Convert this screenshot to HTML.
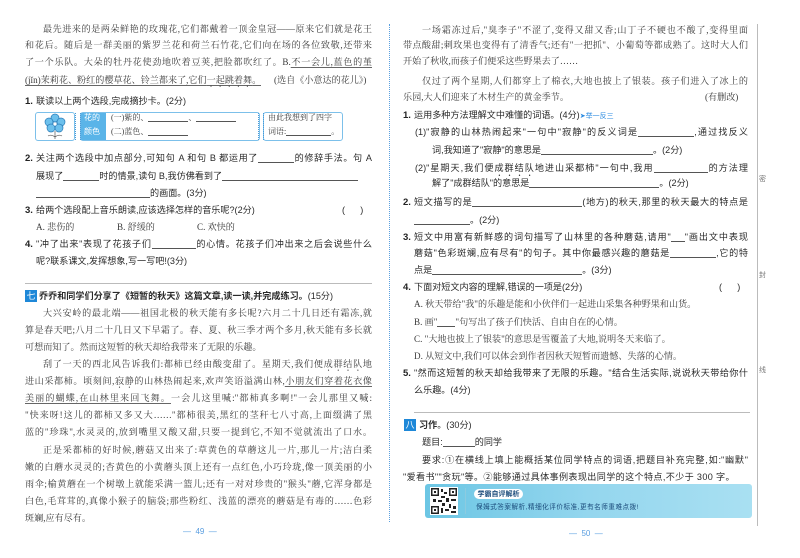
<!DOCTYPE html>
<html><head><meta charset="utf-8">
<style>
*{margin:0;padding:0;box-sizing:border-box}
body{width:800px;height:558px;background:#fff;position:relative;overflow:hidden;font-family:"Liberation Serif","Noto Serif CJK SC",serif;color:#3a3a3a}
.r{position:absolute;height:17px;line-height:17px;font-size:9.1px;white-space:nowrap;overflow:hidden}
.j{text-align:justify;text-align-last:justify;white-space:normal}
.q{font-family:"Liberation Sans","Noto Sans CJK SC",sans-serif;color:#2a2a2a}
.n{position:absolute;font-family:"Liberation Sans",sans-serif;font-weight:bold;font-size:9.5px;line-height:17px;color:#222}
.b{display:inline-block;border-bottom:1px solid #555;height:11px;vertical-align:-2px}
u{text-decoration:underline;text-underline-offset:2px;text-decoration-color:#666}
.dot{-webkit-text-emphasis:dot;-webkit-text-emphasis-position:under;text-emphasis:dot;text-emphasis-position:under right}
.hr{position:absolute;height:1px;background:#bbb}
.tag{position:absolute;width:12px;height:12px;background:#1e88d8;color:#fff;font-size:9px;line-height:12px;text-align:center;font-family:"Noto Sans CJK SC",sans-serif}
</style></head><body>

<!-- binding lines -->
<div style="position:absolute;left:389px;top:24px;width:0;height:498px;border-left:1px dotted #5aa0e0"></div>
<div style="position:absolute;left:757px;top:24px;width:1px;height:502px;background:#bbb"></div>
<div class="r q" style="left:759px;top:171px;font-size:7px;color:#777">密</div>
<div class="r q" style="left:759px;top:267px;font-size:7px;color:#777">封</div>
<div class="r q" style="left:759px;top:362px;font-size:7px;color:#777">线</div>

<!-- LEFT PAGE -->
<div class="r j" style="left:43px;top:21px;width:329px">最先进来的是两朵鲜艳的玫瑰花,它们都戴着一顶金皇冠——原来它们就是花王</div>
<div class="r j" style="left:25px;top:37px;width:347px">和花后。随后是一群美丽的紫罗兰花和荷兰石竹花,它们向在场的各位致敬,还带来</div>
<div class="r j" style="left:25px;top:54px;width:347px">了一个乐队。大朵的牡丹花使劲地吹着豆荚,把脸都吹红了。B.<u>不一会儿,蓝色的堇</u></div>
<div class="r" style="left:25px;top:72px"><u>(jǐn)茉莉花、粉红的樱草花、铃兰都来了,它们<span class="dot">一起跳着舞</span>。</u></div>
<div class="r" style="left:274px;top:72px">(选自《小意达的花儿》)</div>

<div class="n" style="left:25px;top:93px">1.</div>
<div class="r q" style="left:36px;top:93px">联读以上两个选段,完成摘抄卡。(2分)</div>
<!-- card -->
<div style="position:absolute;left:35px;top:112px;width:40px;height:29px;border:1px solid #7cc0ea;border-radius:3px"></div>
<svg style="position:absolute;left:43px;top:113px" width="24" height="27" viewBox="0 0 24 27">
<g fill="#6cc0ec" stroke="#2a7cb8" stroke-width=".7"><circle cx="12" cy="5" r="4"/><circle cx="6" cy="9" r="4"/><circle cx="18" cy="9" r="4"/><circle cx="8" cy="15" r="4"/><circle cx="16" cy="15" r="4"/></g>
<circle cx="12" cy="11" r="2" fill="#fff" stroke="#2a7cb8" stroke-width=".6"/>
<path d="M12 18v8M12 24q-4-3-7-1M12 24q4-3 7-1" stroke="#555" fill="none" stroke-width=".7"/></svg>
<div style="position:absolute;left:80px;top:112px;width:180px;height:29px;border:1px solid #7cc0ea;border-radius:3px"></div>
<div style="position:absolute;left:81px;top:113px;width:25px;height:27px;background:#5ab4e8"></div>
<div class="r q" style="left:84px;top:109px;font-size:8px;color:#fff">花的</div>
<div class="r q" style="left:84px;top:123px;font-size:8px;color:#fff">颜色</div>
<div class="r" style="left:111px;top:109px;font-size:8px">(一)紫的、<span class="b" style="width:40px;height:9px"></span>、<span class="b" style="width:40px;height:9px"></span></div>
<div class="r" style="left:111px;top:123px;font-size:8px">(二)蓝色、<span class="b" style="width:40px;height:9px"></span></div>
<div style="position:absolute;left:263px;top:112px;width:80px;height:29px;border:1px solid #7cc0ea;border-radius:3px"></div>
<div class="r" style="left:268px;top:109px;font-size:8px">由此我想到了四字</div>
<div class="r" style="left:268px;top:123px;font-size:8px">词语:<span class="b" style="width:45px;height:9px"></span>。</div>
<div style="position:absolute;left:75px;top:113px;width:6px;height:27px;border-left:1.5px dotted #4a9ad8;border-right:1.5px dotted #4a9ad8"></div>
<div style="position:absolute;left:258px;top:113px;width:6px;height:27px;border-left:1.5px dotted #4a9ad8;border-right:1.5px dotted #4a9ad8"></div>

<div class="n" style="left:25px;top:150px">2.</div>
<div class="r q j" style="left:36px;top:150px;width:336px">关注两个选段中加点部分,可知句 A 和句 B 都运用了<span class="b" style="width:36px"></span>的修辞手法。句 A</div>
<div class="r q" style="left:36px;top:168px">展现了<span class="b" style="width:36px"></span>时的情景,读句 B,我仿佛看到了<span class="b" style="width:136px"></span></div>
<div class="r q" style="left:36px;top:185px"><span class="b" style="width:114px"></span>的画面。(3分)</div>
<div class="n" style="left:25px;top:202px">3.</div>
<div class="r q" style="left:36px;top:202px">给两个选段配上音乐朗读,应该选择怎样的音乐呢?(2分)</div>
<div class="r q" style="left:342px;top:202px">(&nbsp;&nbsp;&nbsp;&nbsp;&nbsp;&nbsp;)</div>
<div class="r" style="left:36px;top:219px">A. 悲伤的</div>
<div class="r" style="left:117px;top:219px">B. 舒缓的</div>
<div class="r" style="left:197px;top:219px">C. 欢快的</div>
<div class="n" style="left:25px;top:236px">4.</div>
<div class="r q j" style="left:36px;top:236px;width:336px">"冲了出来"表现了花孩子们<span class="b" style="width:44px"></span>的心情。花孩子们冲出来之后会说些什么</div>
<div class="r q" style="left:36px;top:253px">呢?联系课文,发挥想象,写一写吧!(3分)</div>
<div class="hr" style="left:25px;top:283px;width:347px"></div>

<div class="tag" style="left:25px;top:290px">七</div>
<div class="r q" style="left:39px;top:288px;font-weight:bold">乔乔和同学们分享了《短暂的秋天》这篇文章,读一读,并完成练习。<span style="font-weight:normal">(15分)</span></div>
<div class="r j" style="left:43px;top:305px;width:329px">大兴安岭的最北端——祖国北极的秋天能有多长呢?六月二十几日还有霜冻,就</div>
<div class="r j" style="left:25px;top:322px;width:347px">算是春天吧;八月二十几日又下早霜了。春、夏、秋三季才两个多月,秋天能有多长就</div>
<div class="r" style="left:25px;top:339px">可想而知了。然而这短暂的秋天却给我带来了无限的乐趣。</div>
<div class="r j" style="left:43px;top:356px;width:329px">刮了一天的西北风告诉我们:都柿已经由酸变甜了。星期天,我们便<span class="dot">成群结队</span>地</div>
<div class="r j" style="left:25px;top:373px;width:347px">进山采都柿。顷刻间,<span class="dot">寂静</span>的山林热闹起来,欢声笑语溢满山林,<u>小朋友们穿着花衣像</u></div>
<div class="r j" style="left:25px;top:390px;width:347px"><u>美丽的蝴蝶,在山林里来回飞舞。</u>一会儿这里喊:"都柿真多啊!"一会儿那里又喊:</div>
<div class="r j" style="left:25px;top:407px;width:347px">"快来呀!这儿的都柿又多又大……"都柿很美,黑红的茎秆七八寸高,上面缀满了黑</div>
<div class="r j" style="left:25px;top:424px;width:347px">蓝的"珍珠",水灵灵的,放到嘴里又酸又甜,只要一提到它,不知不觉就流出了口水。</div>
<div class="r j" style="left:43px;top:442px;width:329px">正是采都柿的好时候,蘑菇又出来了:草黄色的草蘑这儿一片,那儿一片;洁白柔</div>
<div class="r j" style="left:25px;top:459px;width:347px">嫩的白蘑水灵灵的;杏黄色的小黄蘑头顶上还有一点红色,小巧玲珑,像一顶美丽的小</div>
<div class="r j" style="left:25px;top:476px;width:347px">雨伞;榆黄蘑在一个树墩上就能采满一篮儿;还有一对对珍贵的"猴头"蘑,它浑身都是</div>
<div class="r j" style="left:25px;top:493px;width:347px">白色,毛茸茸的,真像小猴子的脑袋;那些粉红、浅蓝的漂亮的蘑菇是有毒的……色彩</div>
<div class="r" style="left:25px;top:510px">斑斓,应有尽有。</div>
<div class="r q" style="left:183px;top:523px;color:#5a9ee0;font-size:8px">—&nbsp;&nbsp;49&nbsp;&nbsp;—</div>

<!-- RIGHT PAGE -->
<div class="r j" style="left:422px;top:22px;width:326px">一场霜冻过后,"臭李子"不涩了,变得又甜又香;山丁子不硬也不酸了,变得里面</div>
<div class="r j" style="left:403px;top:37px;width:345px">带点酸甜;刺玫果也变得有了清香气;还有"一把抓"、小葡萄等都成熟了。这时大人们</div>
<div class="r" style="left:403px;top:53px">开始了秋收,而孩子们便采这些野果去了……</div>
<div class="r j" style="left:422px;top:73px;width:326px">仅过了两个星期,人们都穿上了棉衣,大地也披上了银装。孩子们进入了冰上的</div>
<div class="r" style="left:403px;top:89px">乐园,大人们迎来了木材生产的黄金季节。</div>
<div class="r" style="left:705px;top:89px">(有删改)</div>
<div class="n" style="left:403px;top:107px">1.</div>
<div class="r q" style="left:414px;top:107px">运用多种方法理解文中难懂的词语。(4分)<span style="color:#2a8ae0;font-size:7px">➤举一反三</span></div>
<div class="r q j" style="left:415px;top:124px;width:333px">(1)"寂静的山林热闹起来"一句中"寂静"的反义词是<span class="b" style="width:56px"></span>,通过找反义</div>
<div class="r q" style="left:432px;top:142px">词,我知道了"寂静"的意思是<span class="b" style="width:112px"></span>。(2分)</div>
<div class="r q j" style="left:415px;top:160px;width:333px">(2)"星期天,我们便<span class="dot">成群结队</span>地进山采都柿"一句中,我用<span class="b" style="width:54px"></span>的方法理</div>
<div class="r q" style="left:432px;top:175px">解了"成群结队"的意思是<span class="b" style="width:130px"></span>。(2分)</div>
<div class="n" style="left:403px;top:194px">2.</div>
<div class="r q j" style="left:414px;top:194px;width:334px">短文描写的是<span class="b" style="width:110px"></span>(地方)的秋天,那里的秋天最大的特点是</div>
<div class="r q" style="left:414px;top:212px"><span class="b" style="width:56px"></span>。(2分)</div>
<div class="n" style="left:403px;top:229px">3.</div>
<div class="r q j" style="left:414px;top:229px;width:334px">短文中用富有新鲜感的词句描写了山林里的各种蘑菇,请用"<span class="b" style="width:14px"></span>"画出文中表现</div>
<div class="r q j" style="left:414px;top:245px;width:334px">蘑菇"色彩斑斓,应有尽有"的句子。其中你最感兴趣的蘑菇是<span class="b" style="width:46px"></span>,它的特</div>
<div class="r q" style="left:414px;top:262px">点是<span class="b" style="width:150px"></span>。(3分)</div>
<div class="n" style="left:403px;top:279px">4.</div>
<div class="r q" style="left:414px;top:279px">下面对短文内容的理解,错误的一项是(2分)</div>
<div class="r q" style="left:719px;top:279px">(&nbsp;&nbsp;&nbsp;&nbsp;&nbsp;&nbsp;)</div>
<div class="r" style="left:414px;top:296px">A. 秋天带给"我"的乐趣是能和小伙伴们一起进山采集各种野果和山货。</div>
<div class="r" style="left:414px;top:314px">B. 画"<span class="b" style="width:18px"></span>"句写出了孩子们快活、自由自在的心情。</div>
<div class="r" style="left:414px;top:331px">C. "大地也披上了银装"的意思是雪覆盖了大地,说明冬天来临了。</div>
<div class="r" style="left:414px;top:348px">D. 从短文中,我们可以体会到作者因秋天短暂而遗憾、失落的心情。</div>
<div class="n" style="left:403px;top:365px">5.</div>
<div class="r q j" style="left:414px;top:365px;width:334px">"然而这短暂的秋天却给我带来了无限的乐趣。"结合生活实际,说说秋天带给你什</div>
<div class="r q" style="left:414px;top:382px">么乐趣。(4分)</div>
<div class="hr" style="left:414px;top:412px;width:336px"></div>

<div class="tag" style="left:404px;top:419px">八</div>
<div class="r q" style="left:419px;top:417px"><b>习作</b>。(30分)</div>
<div class="r q" style="left:422px;top:434px">题目:<span class="b" style="width:32px"></span>的同学</div>
<div class="r q j" style="left:422px;top:452px;width:326px">要求:①在横线上填上能概括某位同学特点的词语,把题目补充完整,如:"幽默"</div>
<div class="r q" style="left:403px;top:469px;letter-spacing:0.35px">"爱看书""贪玩"等。②能够通过具体事例表现出同学的这个特点,不少于 300 字。</div>
<div style="position:absolute;left:425px;top:484px;width:327px;height:34px;border-radius:3px;background:linear-gradient(90deg,#6cc6e4,#94d6ee 50%,#a9e0f2)"></div>
<svg style="position:absolute;left:430px;top:487px" width="28" height="28" viewBox="0 0 28 28">
<rect width="28" height="28" fill="#fff"/>
<g fill="#222"><rect x="1" y="1" width="8" height="8"/><rect x="19" y="1" width="8" height="8"/><rect x="1" y="19" width="8" height="8"/>
<rect x="11" y="2" width="2" height="3"/><rect x="14" y="5" width="3" height="2"/><rect x="11" y="9" width="4" height="2"/><rect x="3" y="12" width="3" height="3"/><rect x="8" y="13" width="4" height="2"/><rect x="16" y="11" width="3" height="4"/><rect x="21" y="12" width="5" height="2"/><rect x="12" y="16" width="3" height="3"/><rect x="19" y="17" width="2" height="4"/><rect x="23" y="19" width="3" height="3"/><rect x="11" y="21" width="2" height="5"/><rect x="15" y="22" width="4" height="2"/><rect x="21" y="24" width="5" height="2"/></g>
<g fill="#fff"><rect x="2.5" y="2.5" width="5" height="5"/><rect x="20.5" y="2.5" width="5" height="5"/><rect x="2.5" y="20.5" width="5" height="5"/></g>
<g fill="#222"><rect x="4" y="4" width="2" height="2"/><rect x="22" y="4" width="2" height="2"/><rect x="4" y="22" width="2" height="2"/></g></svg>
<div style="position:absolute;left:465px;top:488px;width:1px;height:26px;background:#8ccbe0"></div>
<div style="position:absolute;left:474px;top:489px;width:49px;height:10px;background:#fff;border-radius:5px;font-family:'Noto Sans CJK SC',sans-serif;font-size:7px;line-height:10px;text-align:center;font-weight:bold;color:#1a4a7a">学霸自评解析</div>
<div class="r q" style="left:476px;top:499px;font-size:6.6px;color:#1a4a7a;letter-spacing:0.5px">保姆式答案解析,精细化评价标准,更有名师重难点拨!</div>
<div class="r q" style="left:569px;top:525px;color:#5a9ee0;font-size:8px">—&nbsp;&nbsp;50&nbsp;&nbsp;—</div>

</body></html>
